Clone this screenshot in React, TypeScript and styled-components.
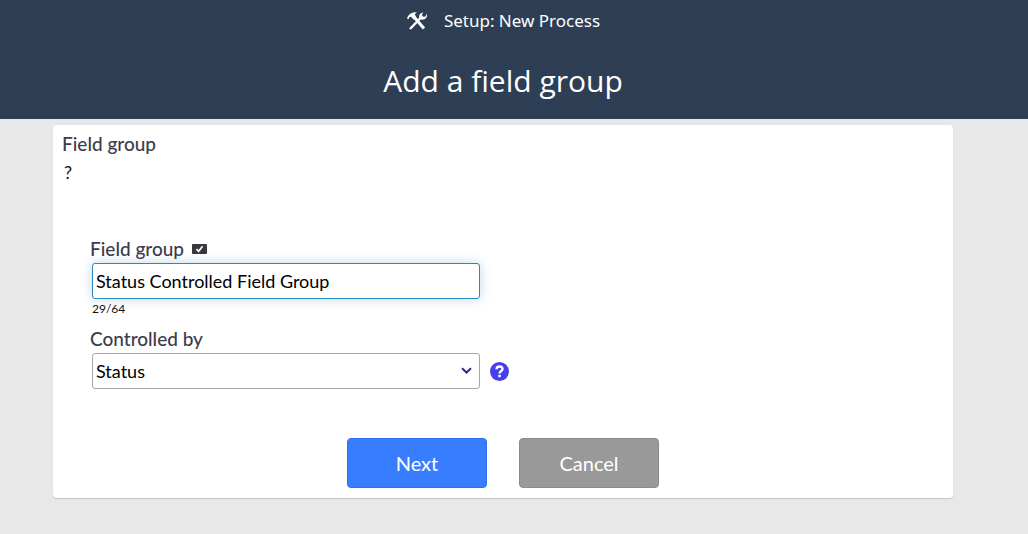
import React, { useState } from "react";
import styled, { createGlobalStyle } from "styled-components";

const GlobalStyle = createGlobalStyle`
  *, *::before, *::after { box-sizing: border-box; }
  body {
    margin: 0;
    background: #e8e8e8;
    color: #111;
    font-family: Lato, "Liberation Sans", sans-serif;
    font-size: 18px;
  }
`;

const Header = styled.header`
  display: flex;
  flex-direction: column;
  align-items: center;
  gap: 19px;
  padding: 6px 22px 12px 0;
  background: #2e3e54;
  color: #fff;
  font-family: "Open Sans", sans-serif;
`;

const Crumb = styled.div`
  display: flex;
  align-items: center;
  gap: 16px;
  font-family: "Noto Sans", "Open Sans", sans-serif;
  font-size: 17px;
  line-height: 30px;
`;

const Title = styled.h1`
  margin: 0;
  font-size: 30px;
  font-weight: 400;
  line-height: 52px;
`;

const Main = styled.main`
  padding: 6px 22px 36px 0;
`;

const Card = styled.form`
  width: 100%;
  max-width: 900px;
  margin: 0 auto;
  padding: 7px 9px 10px;
  border-radius: 4px;
  background: #fff;
  box-shadow: 0 1px 1px #c4c4c4;
`;

const SectionTitle = styled.h2`
  margin: 0;
  color: #3c3c4c;
  font-size: 19px;
  font-weight: 500;
  line-height: 24px;
`;

const Hint = styled.p`
  margin: 0 0 47px;
  padding: 4px 2px;
  line-height: 24px;
`;

const Fields = styled.div`
  display: flex;
  flex-direction: column;
  gap: 7px;
  padding-left: 28px;
`;

const Field = styled.div`
  display: flex;
  flex-direction: column;
`;

const Label = styled.label`
  display: flex;
  align-items: center;
  gap: 8px;
  color: #3c3c4c;
  font-size: 19px;
  font-weight: 500;
  line-height: 28px;
`;

const ControlRow = styled.div`
  display: flex;
  align-items: center;
  gap: 10px;
  padding-left: 2px;
`;

const TextInput = styled.input`
  width: 388px;
  height: 36px;
  padding: 0 3px;
  border: 1px solid #2f86bd;
  border-radius: 3px;
  outline: none;
  background: #fff;
  box-shadow: 0 0 12px rgba(47, 134, 189, 0.3);
  color: #000;
  font: inherit;
`;

const SelectWrap = styled.div`
  display: grid;
  width: 388px;
  align-items: center;

  > * { grid-area: 1 / 1; }
  > svg { justify-self: end; margin-right: 8px; pointer-events: none; }
`;

const Select = styled.select`
  width: 100%;
  height: 36px;
  padding: 0 28px 0 3px;
  border: 1px solid #a5a5ab;
  border-radius: 3px;
  appearance: none;
  background: #fff;
  color: #000;
  font: inherit;
`;

const Counter = styled.span`
  padding-left: 2px;
  font-size: 12px;
  line-height: 19px;
`;

const HelpButton = styled.button`
  display: flex;
  padding: 0;
  border: 0;
  background: none;
  cursor: pointer;
`;

const Actions = styled.div`
  display: flex;
  justify-content: center;
  gap: 32px;
  margin-top: 49px;
`;

const ActionButton = styled.button<{ $primary?: boolean }>`
  width: 140px;
  height: 50px;
  padding: 0;
  border: 1px solid ${(p) => (p.$primary ? "#2f70ee" : "#8b8b8b")};
  border-radius: 4px;
  background: ${(p) => (p.$primary ? "#397dff" : "#999")};
  color: #fff;
  font: inherit;
  font-size: 20px;
  cursor: pointer;
`;

const ToolsIcon = () => (
  <svg width="22" height="20" viewBox="0 0 22 20" fill="none" stroke="#fff" aria-hidden="true">
    <path d="M9 7 18 17.5" strokeWidth="3" />
    <path d="M1 7.5C2.2 3.8 5 1 10.8 1.2L8.8 3.2 10.3 6.3 7.8 8.8 5 5.8 3.2 6.2 2.6 8.3Z" fill="#fff" stroke="none" />
    <path d="M4 18 15 6.5" strokeWidth="2.4" />
    <path d="M13.2 7.2C12.6 4 14.4 1.5 17.2 1.4L15.8 4 17 5.8 19.6 5.5 20.8 2.8C22 6 19.4 9 15.8 8.7Z" fill="#fff" stroke="none" />
  </svg>
);

const RequiredIcon = () => (
  <svg width="15" height="10" viewBox="0 0 15 10" role="img" aria-label="Required">
    <rect width="15" height="10" rx="1" fill="#38383f" />
    <path d="M4.5 5.2 6.6 7.4 10.5 2.2" fill="none" stroke="#fff" strokeWidth="1.7" />
  </svg>
);

const ChevronIcon = () => (
  <svg width="11" height="8" viewBox="0 0 11 8" aria-hidden="true">
    <path d="M1 1.2 5.5 5.5 10 1.2" fill="none" stroke="#292d91" strokeWidth="2" />
  </svg>
);

const HelpIcon = () => (
  <svg width="19" height="19" viewBox="0 0 19 19" aria-hidden="true">
    <circle cx="9.5" cy="9.5" r="9.5" fill="#473fed" />
    <path d="M6.5 7.2C6.6 3.6 12.5 3.5 12.5 7 12.5 9.1 9.6 9 9.6 11.6" fill="none" stroke="#fff" strokeWidth="2.4" />
    <rect x="8.3" y="12.8" width="2.5" height="2.4" fill="#fff" />
  </svg>
);

export default function App() {
  const [name, setName] = useState("Status Controlled Field Group");
  return (
    <>
      <GlobalStyle />
      <Header>
        <Crumb>
          <ToolsIcon />
          <span>Setup: New Process</span>
        </Crumb>
        <Title>Add a field group</Title>
      </Header>
      <Main>
        <Card onSubmit={(e) => e.preventDefault()}>
          <SectionTitle>Field group</SectionTitle>
          <Hint>?</Hint>
          <Fields>
            <Field>
              <Label htmlFor="group-name">
                Field group
                <RequiredIcon />
              </Label>
              <ControlRow>
                <TextInput
                  id="group-name"
                  maxLength={64}
                  value={name}
                  onChange={(e) => setName(e.target.value)}
                />
              </ControlRow>
              <Counter>{name.length}/64</Counter>
            </Field>
            <Field>
              <Label htmlFor="controlled-by">Controlled by</Label>
              <ControlRow>
                <SelectWrap>
                  <Select id="controlled-by" defaultValue="Status">
                    <option>Status</option>
                  </Select>
                  <ChevronIcon />
                </SelectWrap>
                <HelpButton type="button" aria-label="Help">
                  <HelpIcon />
                </HelpButton>
              </ControlRow>
            </Field>
          </Fields>
          <Actions>
            <ActionButton type="submit" $primary>Next</ActionButton>
            <ActionButton type="button">Cancel</ActionButton>
          </Actions>
        </Card>
      </Main>
    </>
  );
}
